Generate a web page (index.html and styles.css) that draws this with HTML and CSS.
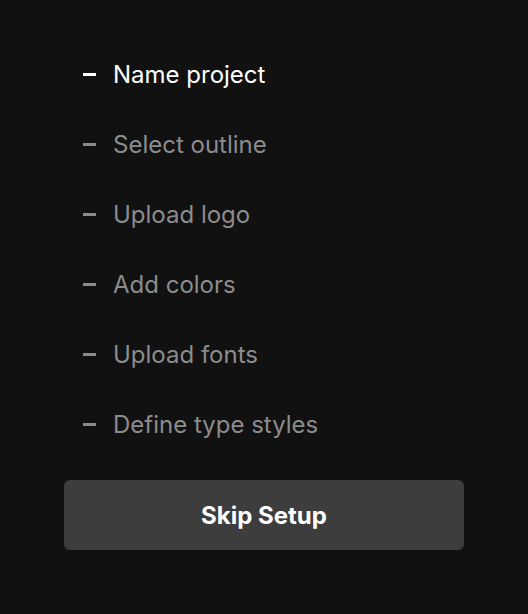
FILE: index.html
```html
<!DOCTYPE html>
<html lang="en">
<head>
    <meta charset="UTF-8">
    <meta name="viewport" content="width=device-width, initial-scale=1.0">
    <title>Project Setup</title>
    <link rel="stylesheet" href="styles.css">
</head>
<body>
    <div class="setup">
        <ul class="steps">
            <li class="step active"><span class="dash"></span>Name project</li>
            <li class="step"><span class="dash"></span>Select outline</li>
            <li class="step"><span class="dash"></span>Upload logo</li>
            <li class="step"><span class="dash"></span>Add colors</li>
            <li class="step"><span class="dash"></span>Upload fonts</li>
            <li class="step"><span class="dash"></span>Define type styles</li>
        </ul>
        <button type="button" class="skip">Skip Setup</button>
    </div>
</body>
</html>
```

FILE: styles.css
```css
body {
    margin: 0;
    background-color: #111111;
    font-family: Inter, "Noto Sans", sans-serif;
}

.setup {
    width: 400px;
    padding: 39px 64px 0;
}

.steps {
    list-style: none;
    margin: 0;
    padding: 0;
}

.step {
    display: flex;
    align-items: center;
    height: 70px;
    font-size: 24px;
    color: #8c8c8c;
}

.step.active {
    color: #ffffff;
}

.dash {
    width: 13px;
    height: 3px;
    margin-left: 19px;
    margin-right: 17px;
    background-color: currentColor;
}

.skip {
    display: block;
    width: 400px;
    height: 70px;
    margin-top: 21px;
    border: none;
    border-radius: 6px;
    background-color: #3d3d3d;
    color: #ffffff;
    font-family: Inter, "Noto Sans", sans-serif;
    font-size: 24px;
    font-weight: 700;
    cursor: pointer;
}
```
